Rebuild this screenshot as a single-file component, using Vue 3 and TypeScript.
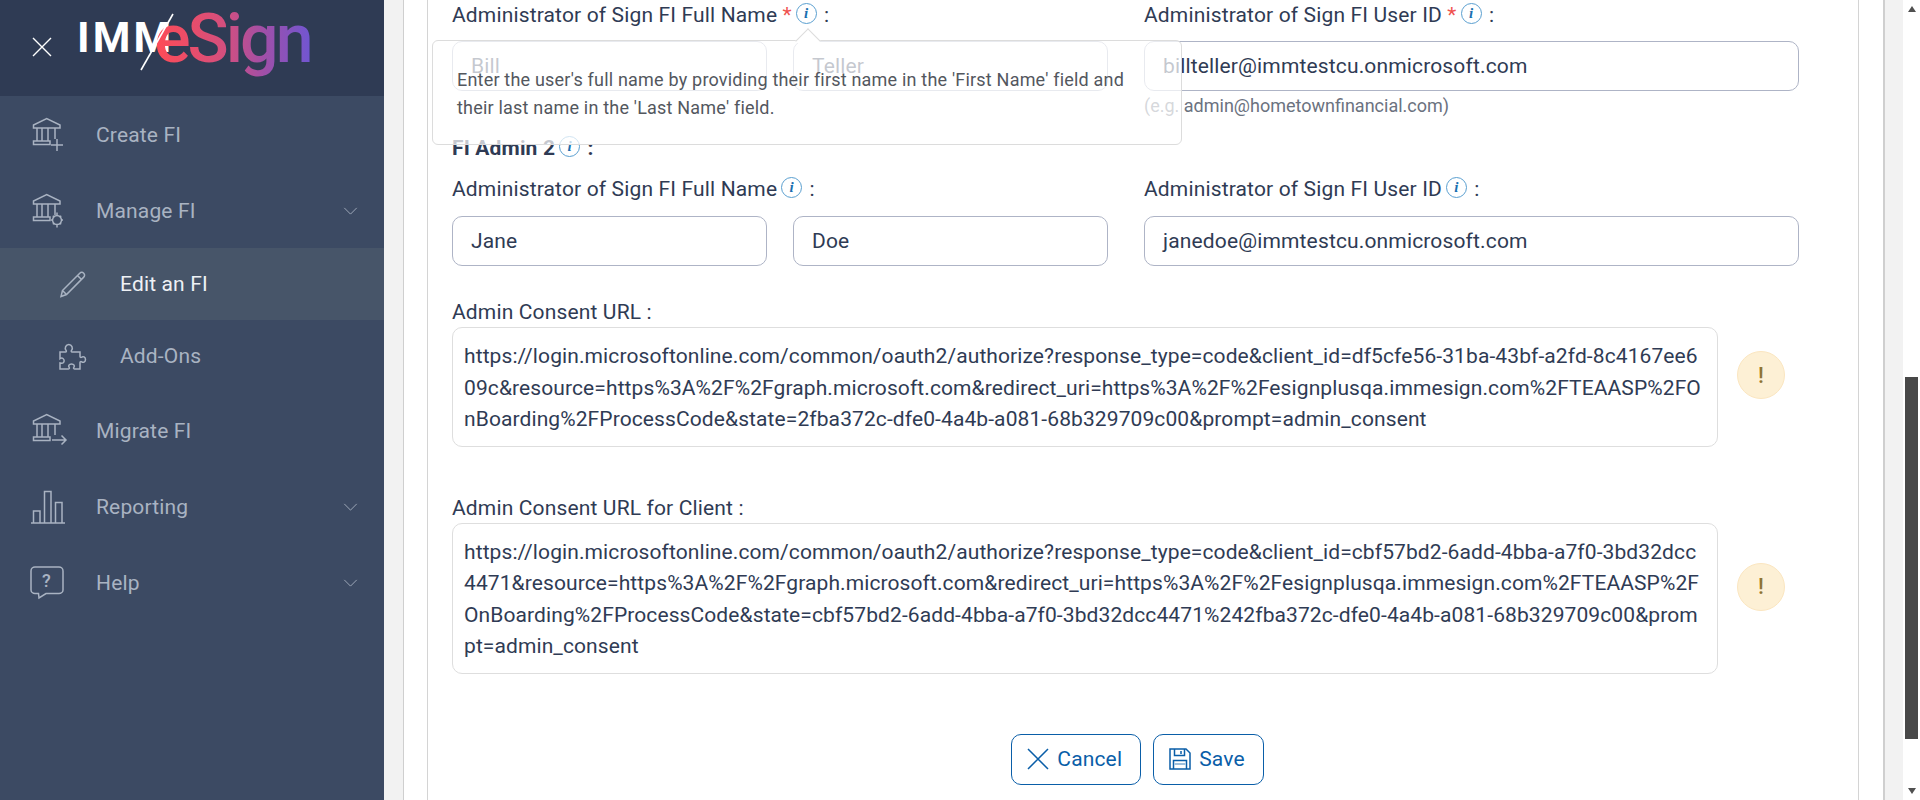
<template>
  <div class="shell">
    <aside class="sidebar">
      <header class="brand">
        <svg class="close-icon" viewBox="0 0 20 20"><path d="M1 1l18 18M19 1L1 19" /></svg>
        <div class="logo">
          <span class="logo-imm">IMM</span>
          <svg class="logo-slash" viewBox="0 0 36 58"><path d="M2 57L34 1" /></svg>
          <span class="logo-esign">eSign</span>
        </div>
      </header>
      <nav>
        <a
          v-for="item in navItems"
          :key="item.label"
          :class="['nav-item', { sub: item.sub, active: item.active }]"
        >
          <svg class="nav-icon" viewBox="0 0 36 36">
            <path :d="item.icon" />
            <text v-if="item.label === 'Help'" x="16.5" y="22" text-anchor="middle" class="help-mark">?</text>
          </svg>
          <span class="nav-label">{{ item.label }}</span>
          <svg v-if="item.chevron" class="chevron" viewBox="0 0 16 9"><path d="M1 1l7 7 7-7" /></svg>
        </a>
      </nav>
    </aside>

    <main class="content">
      <div class="panel">
        <div class="card">
          <div class="field-grid first">
            <div class="field name-field">
              <label class="label">Administrator of Sign FI Full Name <span class="req">*</span><i class="info">i</i> :</label>
              <div class="name-inputs">
                <div class="input">Bill</div>
                <div class="input">Teller</div>
              </div>
              <div class="tip">
                <span class="tip-arrow"></span>
                Enter the user's full name by providing their first name in the 'First Name' field and their last name in the 'Last Name' field.
              </div>
            </div>
            <div class="field">
              <label class="label">Administrator of Sign FI User ID <span class="req">*</span><i class="info">i</i> :</label>
              <div class="input">billteller@immtestcu.onmicrosoft.com</div>
              <div class="hint">(e.g. admin@hometownfinancial.com)</div>
            </div>
          </div>

          <h4 class="section-title">FI Admin 2<i class="info">i</i> :</h4>

          <div class="field-grid second">
            <div class="field">
              <label class="label">Administrator of Sign FI Full Name<i class="info">i</i> :</label>
              <div class="name-inputs">
                <div class="input">Jane</div>
                <div class="input">Doe</div>
              </div>
            </div>
            <div class="field">
              <label class="label">Administrator of Sign FI User ID<i class="info">i</i> :</label>
              <div class="input">janedoe@immtestcu.onmicrosoft.com</div>
            </div>
          </div>

          <div v-for="link in consentLinks" :key="link.label" class="consent">
            <label class="label">{{ link.label }} :</label>
            <div class="consent-row">
              <div class="url-box">{{ link.url }}</div>
              <span class="warn">!</span>
            </div>
          </div>

          <div class="actions">
            <button class="btn">
              <svg class="btn-icon" viewBox="0 0 22 22"><path d="M1 1l20 20M21 1L1 21" /></svg>
              Cancel
            </button>
            <button class="btn">
              <svg class="btn-icon" viewBox="0 0 22 22">
                <path d="M1 1h16l4 4v16H1z" />
                <path d="M5.5 1v6.5h10V1M12 3v3M4.5 21v-8.5h13V21" />
                <path class="pale" d="M5.5 15h11v2h-11z" />
              </svg>
              Save
            </button>
          </div>
        </div>
      </div>
    </main>

    <div class="scrollbar">
      <span class="arrow up"></span>
      <div class="thumb"></div>
      <span class="arrow down"></span>
    </div>
  </div>
</template>

<script setup lang="ts">
interface NavItem {
  label: string
  icon: string
  sub?: boolean
  active?: boolean
  chevron?: boolean
}

const bank =
  'M3.5 11V8L16.7 1.5 30 8v3zM7 11v13M12 11v13M18 11v13M25 11v11M3.5 24H20v3.5H3.5z'

const navItems: NavItem[] = [
  { label: 'Create FI', icon: bank + 'M27 22v12M21 28h12' },
  {
    label: 'Manage FI',
    chevron: true,
    icon:
      bank +
      'M27 22.5a4.5 4.5 0 1 0 .01 0zM27 19.5v3M27 31.5v3M21 27h1.500M31.500 27H33M22.8 22.8l1 1M30.200 30.200l1 1M31.200 22.800l-1 1M23.800 30.200l-1 1',
  },
  {
    label: 'Edit an FI',
    sub: true,
    active: true,
    icon: 'M8.5 24.500L25.500 7.500c1.500-1.500 3-1.500 4.200-.3s1.200 2.800-.2 4.200L12.500 28.500 7 30.500zM8.500 24.500l4 4M23.500 9.500l4.500 4.500',
  },
  {
    label: 'Add-Ons',
    sub: true,
    icon:
      'M6 14h5.500c1 0 1.200-1 .5-1.800-1.600-2-.3-5.700 2.800-5.700s4.400 3.700 2.800 5.700c-.7.8-.5 1.800.5 1.800H26v4.500c0 1 1 1.200 1.800.6 1.200-1 3.700-.2 3.700 2.400s-2.500 3.400-3.700 2.400c-.8-.6-1.800-.4-1.800.6V31h-5.500c-1 0-1.200-1-.6-1.800 1-1.200.2-3.200-2.400-3.200s-3.400 2-2.400 3.200c.6.8.4 1.800-.6 1.800H6v-6c1.500.3 2.500.6 3.300-.2 1.300-1.300 1-3.300-.3-4.300-.8-.6-2-.5-3 .2z',
  },
  { label: 'Migrate FI', icon: bank + 'M22 27h14M31.500 22.500L36 27l-4.500 4.500' },
  {
    label: 'Reporting',
    chevron: true,
    icon: 'M1 34h34M3.500 34V22h6.500v12M14.500 34V2.500h6.500V34M25.500 34V13.500H32V34',
  },
  {
    label: 'Help',
    chevron: true,
    icon: 'M5 2h24c2 0 4 1.500 4 4v19c0 2-2 3.500-4 3.500H16L9 33l-.5-4.500H5c-2 0-4-1.500-4-3.500V6c0-2.500 2-4 4-4z',
  },
]

const consentLinks = [
  {
    label: 'Admin Consent URL',
    url: 'https://login.microsoftonline.com/common/oauth2/authorize?response_type=code&client_id=df5cfe56-31ba-43bf-a2fd-8c4167ee609c&resource=https%3A%2F%2Fgraph.microsoft.com&redirect_uri=https%3A%2F%2Fesignplusqa.immesign.com%2FTEAASP%2FOnBoarding%2FProcessCode&state=2fba372c-dfe0-4a4b-a081-68b329709c00&prompt=admin_consent',
  },
  {
    label: 'Admin Consent URL for Client',
    url: 'https://login.microsoftonline.com/common/oauth2/authorize?response_type=code&client_id=cbf57bd2-6add-4bba-a7f0-3bd32dcc4471&resource=https%3A%2F%2Fgraph.microsoft.com&redirect_uri=https%3A%2F%2Fesignplusqa.immesign.com%2FTEAASP%2FOnBoarding%2FProcessCode&state=cbf57bd2-6add-4bba-a7f0-3bd32dcc4471%242fba372c-dfe0-4a4b-a081-68b329709c00&prompt=admin_consent',
  },
]
</script>

<style>
html,
body {
  margin: 0;
  overflow: hidden;
}
</style>

<style scoped>
.shell {
  display: flex;
  height: 800px;
  overflow: hidden;
  font-family: Roboto, 'Liberation Sans', sans-serif;
  font-size: 21px;
  letter-spacing: 0.15px;
  color: #2f3b54;
}

/* sidebar */
.sidebar {
  width: 384px;
  flex: none;
  background: #3c4a63;
}

.brand {
  display: flex;
  align-items: center;
  height: 96px;
  padding-left: 32px;
  box-sizing: border-box;
  background: #2f3b54;
}

.close-icon {
  width: 20px;
  height: 20px;
  margin-top: -2px;
  fill: none;
  stroke: #fff;
  stroke-width: 1.4;
}

.logo {
  position: relative;
  display: flex;
  width: 240px;
  height: 96px;
  margin-left: 25px;
}

.logo-imm {
  margin-top: 13px;
  font-size: 43px;
  line-height: 48px;
  font-weight: 700;
  letter-spacing: 3.1px;
  color: #fff;
}

.logo-slash {
  position: absolute;
  left: 62px;
  top: 13px;
  width: 36px;
  height: 58px;
  fill: none;
  stroke: #fff;
  stroke-width: 1.6;
}

.logo-esign {
  margin: -1px 0 0 -20px;
  font-size: 68px;
  line-height: 80px;
  font-weight: 500;
  letter-spacing: -3px;
  background: linear-gradient(90deg, #ff4b55 0%, #d44f7e 45%, #a04fa8 70%, #7056d2 100%);
  -webkit-background-clip: text;
  background-clip: text;
  color: transparent;
}

nav {
  padding-top: 1px;
}

.nav-item {
  display: flex;
  align-items: center;
  height: 76px;
  padding: 0 26px 0 30px;
  color: #a9b3c2;
}

.nav-item.sub {
  height: 72.5px;
  padding-left: 54px;
}

.nav-item.active {
  height: 72px;
  margin-top: -1px;
  background: #475569;
  color: #eef1f5;
}

.nav-icon {
  width: 36px;
  height: 36px;
  flex: none;
  overflow: visible;
  fill: none;
  stroke: #a9b3c2;
  stroke-width: 1.5;
}

.help-mark {
  font-family: Roboto, sans-serif;
  font-size: 18px;
  font-weight: 500;
  fill: #a9b3c2;
  stroke: none;
}

.nav-label {
  margin-left: 30px;
}

.chevron {
  width: 15px;
  height: 8px;
  margin-left: auto;
  fill: none;
  stroke: #a9b3c2;
  stroke-width: 1;
}

/* main area */
.content {
  flex: 1;
  min-width: 0;
  padding: 0 18px 0 19px;
  background: #f2f2f2;
}

.panel {
  height: 100%;
  padding: 0 24px 0 23px;
  background: #fff;
  border: solid #cfcfcf;
  border-width: 0 2px 0 1px;
}

.card {
  height: 100%;
  padding: 3px 24px 0;
  box-sizing: border-box;
  border: solid #d4d4d4;
  border-width: 0 1px;
}

.field-grid {
  display: grid;
  grid-template-columns: 656px 655px;
  gap: 36px;
}

.field {
  position: relative;
}

.label {
  display: block;
  height: 24px;
  line-height: 24px;
  margin-bottom: 14px;
  white-space: nowrap;
}

.second .label {
  margin-bottom: 15px;
}

.req {
  color: #ef5350;
}

.info {
  display: inline-flex;
  align-items: center;
  justify-content: center;
  width: 19px;
  height: 19px;
  margin: 0 2px 0 4px;
  border: 1px solid #5a9fd0;
  border-radius: 50%;
  font-family: 'Liberation Serif', serif;
  font-size: 15px;
  font-weight: 700;
  line-height: 1;
  color: #1a6fb0;
  vertical-align: 4px;
}

.name-inputs {
  display: grid;
  grid-template-columns: 315px 315px;
  gap: 26px;
}

.input {
  height: 50px;
  padding: 0 18px;
  box-sizing: border-box;
  border: 1px solid #aeb4c6;
  border-radius: 10px;
  line-height: 48px;
}

.hint {
  margin-top: 5px;
  font-size: 18px;
  letter-spacing: 0;
  line-height: 20px;
  color: #6b7280;
}

.tip {
  position: absolute;
  top: 37px;
  left: -20px;
  z-index: 2;
  width: 750px;
  height: 105px;
  padding: 25px 24px 0;
  box-sizing: border-box;
  background: rgba(255, 255, 255, 0.72);
  border: 1px solid #dcdcdc;
  border-radius: 6px;
  font-size: 18px;
  letter-spacing: 0.2px;
  line-height: 28px;
  color: #53575e;
}

.tip-arrow {
  position: absolute;
  top: -9px;
  left: 366px;
  width: 17px;
  height: 17px;
  background: #fff;
  border: solid #dcdcdc;
  border-width: 1px 0 0 1px;
  transform: rotate(45deg);
}

.section-title {
  height: 24px;
  margin: 20px 0 17px;
  font-size: 21px;
  line-height: 24px;
  font-weight: 700;
}

.consent {
  margin-top: 34px;
}

.consent + .consent {
  margin-top: 49px;
}

.consent .label {
  margin-bottom: 3px;
}

.consent-row {
  display: flex;
  align-items: center;
  gap: 19px;
}

.url-box {
  width: 1266px;
  flex: none;
  padding: 13px 11px 10px;
  box-sizing: border-box;
  border: 1px solid #dedede;
  border-radius: 10px;
  letter-spacing: 0.1px;
  line-height: 31.5px;
  word-break: break-all;
}

.warn {
  display: flex;
  align-items: center;
  justify-content: center;
  width: 48px;
  height: 48px;
  margin-bottom: 23px;
  box-sizing: border-box;
  background: #fdf0d5;
  border: 1px solid #fbe6c0;
  border-radius: 50%;
  font-size: 22px;
  font-weight: 500;
  color: #8f7433;
}

.actions {
  display: flex;
  justify-content: center;
  gap: 12px;
  margin-top: 60px;
  padding-right: 11px;
}

.btn {
  display: flex;
  align-items: center;
  gap: 8px;
  height: 51px;
  padding: 0 18px 0 15px;
  background: #fff;
  border: 1.5px solid #0a5ea8;
  border-radius: 10px;
  font: inherit;
  letter-spacing: inherit;
  color: #0a5ea8;
}

.btn-icon {
  width: 22px;
  height: 22px;
  fill: none;
  stroke: #0a5ea8;
  stroke-width: 1.5;
}

.btn-icon .pale {
  fill: #9dbfdc;
  stroke: none;
}

/* fake browser scrollbar */
.scrollbar {
  display: flex;
  flex-direction: column;
  align-items: center;
  width: 17px;
  flex: none;
  padding: 6px 0;
  box-sizing: border-box;
  background: #fff;
}

.arrow {
  width: 0;
  height: 0;
  border: solid transparent;
  border-width: 0 4px;
}

.arrow.up {
  border-bottom: 6px solid #505050;
}

.arrow.down {
  margin-top: auto;
  border-top: 6px solid #505050;
}

.thumb {
  width: 13px;
  height: 362px;
  margin-top: 365px;
  background: #484848;
}
</style>
